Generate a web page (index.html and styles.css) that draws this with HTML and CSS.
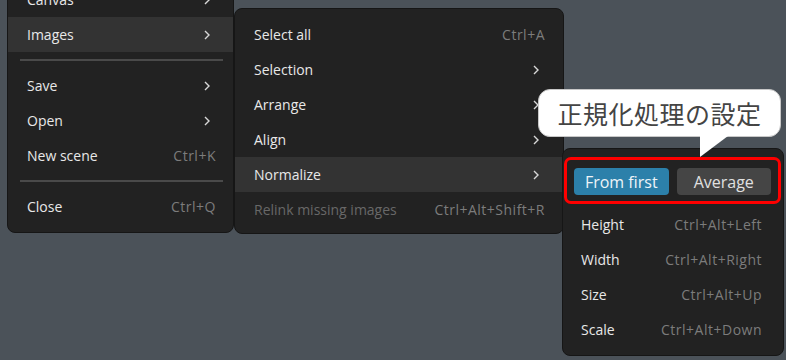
FILE: index.html
```html
<!DOCTYPE html>
<html lang="en">
<head>
    <meta charset="UTF-8">
    <meta name="viewport" content="width=device-width, initial-scale=1.0">
    <title>Images menu</title>
    <link rel="stylesheet" href="styles.css">
</head>
<body>
    <!-- main menu -->
    <div class="menu menu-main">
        <div class="item"><span class="label">Canvas</span><svg class="chev" viewBox="0 0 6 10"><polyline points="1,1 5,5 1,9"/></svg></div>
        <div class="item active"><span class="label">Images</span><svg class="chev" viewBox="0 0 6 10"><polyline points="1,1 5,5 1,9"/></svg></div>
        <div class="sep"></div>
        <div class="item"><span class="label">Save</span><svg class="chev" viewBox="0 0 6 10"><polyline points="1,1 5,5 1,9"/></svg></div>
        <div class="item"><span class="label">Open</span><svg class="chev" viewBox="0 0 6 10"><polyline points="1,1 5,5 1,9"/></svg></div>
        <div class="item"><span class="label">New scene</span><span class="key">Ctrl+K</span></div>
        <div class="sep"></div>
        <div class="item"><span class="label">Close</span><span class="key">Ctrl+Q</span></div>
    </div>

    <!-- images submenu -->
    <div class="menu menu-images">
        <div class="item"><span class="label">Select all</span><span class="key">Ctrl+A</span></div>
        <div class="item"><span class="label">Selection</span><svg class="chev" viewBox="0 0 6 10"><polyline points="1,1 5,5 1,9"/></svg></div>
        <div class="item"><span class="label">Arrange</span><svg class="chev" viewBox="0 0 6 10"><polyline points="1,1 5,5 1,9"/></svg></div>
        <div class="item"><span class="label">Align</span><svg class="chev" viewBox="0 0 6 10"><polyline points="1,1 5,5 1,9"/></svg></div>
        <div class="item active"><span class="label">Normalize</span><svg class="chev" viewBox="0 0 6 10"><polyline points="1,1 5,5 1,9"/></svg></div>
        <div class="item disabled"><span class="label">Relink missing images</span><span class="key">Ctrl+Alt+Shift+R</span></div>
    </div>

    <!-- normalize submenu -->
    <div class="menu menu-normalize">
        <div class="mode-row">
            <button class="mode on">From first</button>
            <button class="mode">Average</button>
        </div>
        <div class="item"><span class="label">Height</span><span class="key">Ctrl+Alt+Left</span></div>
        <div class="item"><span class="label">Width</span><span class="key">Ctrl+Alt+Right</span></div>
        <div class="item"><span class="label">Size</span><span class="key">Ctrl+Alt+Up</span></div>
        <div class="item"><span class="label">Scale</span><span class="key">Ctrl+Alt+Down</span></div>
    </div>

    <div class="callout">正規化処理の設定</div>
</body>
</html>
```

FILE: styles.css
```css
body {
    margin: 0;
    width: 786px;
    height: 360px;
    overflow: hidden;
    position: relative;
    background-color: #4b5259;
    font-family: "Open Sans", "Noto Sans", sans-serif;
    font-size: 14px;
    color: #e8e8e8;
}

.menu {
    position: absolute;
    box-sizing: border-box;
    background-color: #222;
    border: 1px solid #161616;
    border-radius: 8px;
    display: flex;
    flex-direction: column;
}

.menu-main {
    left: 7px;
    top: -27px;
    width: 227px;
    padding: 8px 0 8px;
}

.menu-images {
    left: 234px;
    top: 8px;
    width: 330px;
    padding: 8px 0 6px;
}

.menu-normalize {
    left: 562px;
    top: 148px;
    width: 222px;
    padding: 8px 0 8px;
}

.item {
    height: 35px;
    display: flex;
    align-items: center;
    justify-content: space-between;
    padding: 0 18px 0 19px;
}

.menu-main .item {
    padding-right: 17px;
}

.menu-normalize .item {
    padding: 0 21px 0 18px;
}

.item.active {
    background-color: #333;
}

.item.disabled .label {
    color: #686868;
}

.key {
    color: #7c7c7c;
    letter-spacing: 0.5px;
}

.chev {
    width: 6px;
    height: 10px;
    margin-right: 6px;
    fill: none;
    stroke: #d8d8d8;
    stroke-width: 1.4;
}

.sep {
    height: 2px;
    background-color: #4a4a4a;
    margin: 7px 10px 7px 12px;
}

.mode-row {
    display: flex;
    gap: 8px;
    margin: 0 2px 3px 1px;
    padding: 8px 7px 6px;
    border: 3px solid #ff0000;
    border-radius: 7px;
}

.mode {
    flex: 1;
    height: 27px;
    border: none;
    border-radius: 4px;
    background-color: #454545;
    color: #e0e0e0;
    font-family: inherit;
    font-size: 16px;
    padding: 0;
}

.mode.on {
    background-color: #2c80aa;
    color: #eef4f8;
}

.callout {
    position: absolute;
    left: 538px;
    top: 89px;
    width: 243px;
    height: 48px;
    box-sizing: border-box;
    background-color: #fff;
    border: 1px solid #c8c8c8;
    border-radius: 12px;
    display: flex;
    align-items: center;
    justify-content: center;
    font-family: "Noto Sans CJK JP", sans-serif;
    font-size: 25px;
    color: #444;
    letter-spacing: 0.5px;
}

.callout::after {
    content: "";
    position: absolute;
    left: 161px;
    top: 46px;
    width: 28px;
    height: 21px;
    background-color: #fff;
    clip-path: polygon(0 0, 100% 0, 0 100%);
}
```
